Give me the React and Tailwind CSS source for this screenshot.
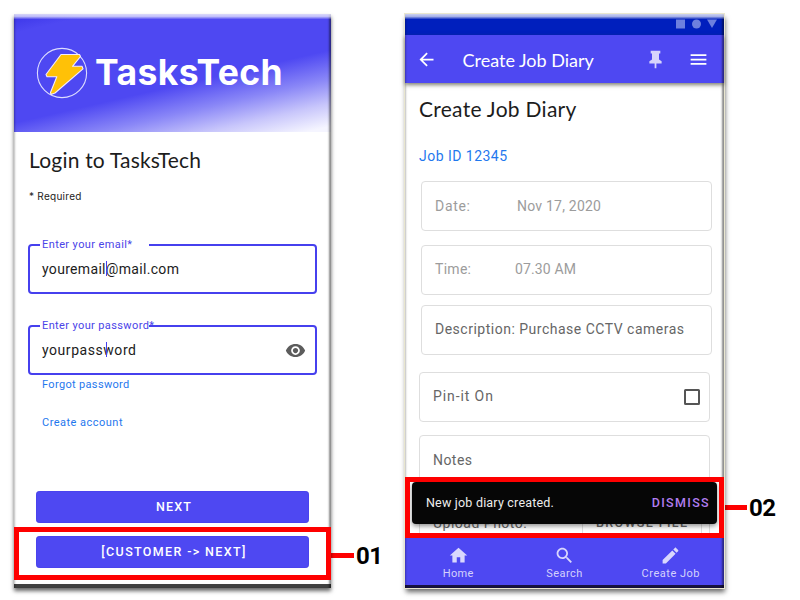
function StatusIcons() {
  return (
    <svg width="42" height="10" viewBox="0 0 42 10" className="fill-[#6d80de]">
      <rect x="0" y="0.5" width="9" height="9" />
      <circle cx="20.5" cy="5" r="4.5" />
      <path d="M31 0.5h10L36 9z" />
    </svg>
  );
}

function Logo() {
  return (
    <svg width="52" height="52" viewBox="0 0 52 52" className="shrink-0">
      <circle cx="26" cy="26" r="24.6" fill="none" stroke="#dcdcff" strokeWidth="1.1" />
      <path
        d="M25 7.5H43.5L44.5 9.5L36.5 19.3H46L47 21.8L19 46L15 47.5L14.5 45.5L20.8 29.8H11L10 27.5z"
        fill="#ffc107"
        stroke="#f3ecff"
        strokeWidth="1.1"
        strokeLinejoin="round"
      />
    </svg>
  );
}

function Icon({ d, className }) {
  return (
    <svg viewBox="0 0 24 24" className={className}>
      <path d={d} />
    </svg>
  );
}

const paths = {
  back: "M20 11H7.83l5.59-5.59L12 4l-8 8 8 8 1.41-1.41L7.83 13H20v-2z",
  menu: "M3 18h18v-2H3v2zm0-5h18v-2H3v2zm0-7v2h18V6H3z",
  eye: "M12 4.5C7 4.5 2.73 7.61 1 12c1.73 4.39 6 7.5 11 7.5s9.27-3.11 11-7.5c-1.73-4.39-6-7.5-11-7.5zM12 17c-2.76 0-5-2.24-5-5s2.24-5 5-5 5 2.24 5 5-2.24 5-5 5zm0-8c-1.66 0-3 1.34-3 3s1.34 3 3 3 3-1.34 3-3-1.34-3-3-3z",
  pin: "M16 12V5h1.5V2h-11v3H8v7l-3 2v2.5h6V22h2v-5.500h6V14z",
  home: "M10 20v-6h4v6h5v-8h3L12 3 2 12h3v8z",
  search:
    "M15.5 14h-.79l-.28-.27C15.41 12.59 16 11.11 16 9.5 16 5.91 13.09 3 9.5 3S3 5.91 3 9.5 5.91 16 9.5 16c1.61 0 3.09-.59 4.23-1.57l.27.28v.79l5 4.99L20.49 19l-4.99-5zm-6 0C7.01 14 5 11.99 5 9.5S7.01 5 9.5 5 14 7.01 14 9.5 11.99 14 9.5 14z",
  edit: "M3 17.25V21h3.75L17.81 9.94l-3.75-3.75L3 17.25zM20.71 7.04c.39-.39.39-1.02 0-1.41l-2.34-2.34c-.39-.39-1.02-.39-1.41 0l-1.83 1.83 3.75 3.75 1.83-1.83z",
};

function LoginField({ label, labelSpacing, value, valueSpacing, caret, children }) {
  return (
    <div className="relative flex h-[50px] w-[289px] items-center justify-between rounded-[4px] border-2 border-[#4640ee] pr-[9px] pl-3">
      <div className="absolute -top-[9px] left-[10px] h-4 w-[109px] bg-white pl-0.5">
        <span className={`block text-[11px] leading-4 whitespace-nowrap text-[#4a44e8] ${labelSpacing}`}>{label}</span>
      </div>
      <span className={`text-[14px] leading-5 text-[#1c1c1c] ${valueSpacing}`}>{value}</span>
      <span className={`absolute top-[15px] h-[15px] w-px bg-[#4640ee] ${caret}`} />
      {children}
    </div>
  );
}

function PhoneEdge() {
  return (
    <div className="pointer-events-none absolute inset-0 shadow-[inset_-3px_0_2px_-1px_rgba(0,0,0,0.45),inset_2px_0_2px_-1px_rgba(0,0,0,0.25)]">
      <div className="h-[5px] bg-linear-to-b from-white/80 via-white/65 to-white/10" />
    </div>
  );
}

function LoginPhone() {
  return (
    <section className="relative mt-[14px] flex h-[574px] w-[317px] shrink-0 flex-col bg-white shadow-[0_3px_4px_rgba(0,0,0,0.6)]">
      <header className="flex h-[118px] items-center bg-[linear-gradient(167deg,#3a34e8_0%,#4e48f2_10%,#4e48f2_57%,#8a87f7_72%,#c8c6fb_85%,#f5f5ff_97%)] pl-[22px]">
        <Logo />
        <span className="ml-[7px] font-[Inter,sans-serif] text-[35.5px] leading-10 font-bold tracking-[0.4px] text-white">TasksTech</span>
      </header>
      <div className="pt-[14px] pl-[14px]">
        <h1 className="pl-[1px] font-[Lato,sans-serif] text-[21px] leading-7 tracking-[0.2px] text-[#1c1c1c]">Login to TasksTech</h1>
        <p className="mt-[14px] pl-[1px] font-[Inter,sans-serif] text-[10px] leading-4 tracking-[0.27px] text-[#222]">* Required</p>
        <div className="mt-[40px]">
          <LoginField label="Enter your email*" labelSpacing="tracking-[0.4px]" value="youremail@mail.com" valueSpacing="tracking-[0.32px]" caret="left-[76px]" />
        </div>
        <div className="mt-[31px]">
          <LoginField label="Enter your password*" labelSpacing="tracking-[0.38px]" value="yourpassword" valueSpacing="tracking-[0.55px]" caret="left-[76px]">
            <Icon d={paths.eye} className="size-[21px] fill-[#5c5c5c]" />
          </LoginField>
        </div>
        <a className="mt-[2px] block pl-[14px] text-[11px] leading-4 tracking-[0.34px] text-[#1f78ee]">Forgot password</a>
        <a className="mt-[22px] block pl-[14px] text-[11px] leading-4 tracking-[0.48px] text-[#1f78ee]">Create account</a>
      </div>
      <div className="mt-auto">
        <button className="mb-[4px] ml-[22px] flex h-8 w-[273px] items-center justify-center rounded-[4px] bg-[#4e48f2] pt-px pl-[3px] text-[12.5px] font-medium tracking-[1.18px] text-white shadow-[inset_0_0_1px_#2823c8]">NEXT</button>
        <div className="relative z-10 flex h-[53px] w-[317px] items-start justify-center border-5 border-[#fe0000] pt-1">
          <button className="flex h-8 w-[273px] items-center justify-center rounded-[4px] bg-[#4e48f2] pl-[3px] text-[12.5px] font-medium tracking-[1.35px] text-white shadow-[inset_0_0_1px_#2823c8]">[CUSTOMER -&gt; NEXT]</button>
        </div>
        <div className="mt-[4px] h-1 bg-[#404040]" />
      </div>
      <PhoneEdge />
    </section>
  );
}

function Callout({ number, className, spacing }) {
  return (
    <div className={`flex items-center ${className}`}>
      <span className="h-[5px] w-[23px] bg-[#fe0000]" />
      <span className={`ml-[2px] pt-px text-[24px] leading-6 font-bold text-black ${spacing}`}>{number}</span>
    </div>
  );
}

const box = "flex h-[50px] w-[291px] items-center rounded-[4px] border border-[#dedede] text-[14px]";

function DiaryPhone() {
  return (
    <section className="relative mt-[14px] flex h-[574px] w-[319px] shrink-0 flex-col bg-white shadow-[0_0_0_1px_#e9e6cf,1px_4px_5px_rgba(0,0,0,0.6)]">
      <div className="flex h-[21px] shrink-0 justify-end bg-[#001fbd] pt-[5px] pr-[6px]">
        <StatusIcons />
      </div>
      <header className="flex h-12 shrink-0 items-center bg-[#4e48f2] text-white shadow-[0_2px_4px_rgba(60,60,40,0.65)]">
        <Icon d={paths.back} className="ml-[11px] size-[21px] fill-white" />
        <span className="ml-[25.5px] pt-px font-[Lato,sans-serif] text-[18px] leading-6">Create Job Diary</span>
        <Icon d={paths.pin} className="mt-[1px] ml-[51px] size-[21px] fill-[#d6d4fc]" />
        <Icon d={paths.menu} className="ml-[22.5px] size-[21px] fill-white" />
      </header>
      <div className="h-[455px] shrink-0 overflow-hidden pt-3 pl-[14px] text-[#666]">
        <h1 className="font-[Lato,sans-serif] text-[21px] leading-7 tracking-[0.28px] text-[#1c1c1c]">Create Job Diary</h1>
        <p className="mt-[23px] text-[14px] leading-5 tracking-[0.47px] text-[#1f78ee]">Job ID 12345</p>
        <div className={`${box} mt-[15px] ml-[2px] pl-[13px] text-[#9c9c9c]`}>
          <span className="w-[82px] tracking-[0.7px]">Date:</span>
          <span className="tracking-[0.22px]">Nov 17, 2020</span>
        </div>
        <div className={`${box} mt-[14px] ml-[2px] pl-[13px] text-[#9c9c9c]`}>
          <span className="w-[80px] pb-px tracking-[0.28px]">Time:</span>
          <span className="pb-px tracking-[0.14px]">07.30 AM</span>
        </div>
        <div className={`${box} mt-[10px] ml-[2px] pl-[13px]`}>
          <span className="pb-px tracking-[0.5px]">Description: Purchase CCTV cameras</span>
        </div>
        <div className={`${box} mt-[17px] justify-between pr-[9px] pl-[13px]`}>
          <span className="pb-px tracking-[0.9px]">Pin-it On</span>
          <span className="size-4 rounded-[1.5px] border-2 border-[#555]" />
        </div>
        <div className={`${box} mt-[13px] pl-[13px]`}>
          <span className="tracking-[0.45px]">Notes</span>
        </div>
        <div className={`${box} mt-[13px] justify-between pr-[7px] pl-[13px]`}>
          <span className="pt-px tracking-[0.5px]">Upload Photo:</span>
          <span className="flex h-[38px] w-[120px] items-center border border-[#dedede] pt-px pl-[13px] text-[12.5px] font-medium tracking-[1.36px]">BROWSE FILE</span>
        </div>
      </div>
      <nav className="grid h-[47px] shrink-0 grid-cols-3 bg-[#4e48f2] pt-[7px] text-[11px] leading-4 text-[#d4d2fc]">
        <div className="flex flex-col items-center">
          <Icon d={paths.home} className="size-[21px] fill-[#d9d7fd]" />
          <span className="tracking-[0.3px]">Home</span>
        </div>
        <div className="flex flex-col items-center">
          <Icon d={paths.search} className="size-[21px] fill-[#d9d7fd]" />
          <span className="tracking-[0.44px]">Search</span>
        </div>
        <div className="flex flex-col items-center">
          <Icon d={paths.edit} className="size-[21px] fill-[#d9d7fd]" />
          <span className="tracking-[0.52px]">Create Job</span>
        </div>
      </nav>
      <div className="h-[3px] shrink-0 bg-[#17123f]" />
      <div className="absolute top-[468px] left-[7px] flex h-[42px] w-[305px] items-center justify-between rounded-[4px] bg-[#060606] pr-[7px] pl-[14px] text-[12.5px] shadow-[0_2px_5px_rgba(0,0,0,0.45)]">
        <span className="tracking-[0.2px] text-[#ededed]">New job diary created.</span>
        <span className="font-medium tracking-[1.35px] text-[#b17df0]">DISMISS</span>
      </div>
      <PhoneEdge />
      <div className="absolute top-[463px] left-0 h-[61px] w-[319px] border-5 border-[#fe0000]" />
    </section>
  );
}

export default function App() {
  return (
    <main className="flex h-[600px] w-[800px] items-start overflow-hidden bg-white pl-[14px] font-[Roboto,sans-serif]">
      <LoginPhone />
      <Callout number="01" className="mt-[543px] w-[74px] shrink-0" spacing="tracking-[-0.5px]" />
      <DiaryPhone />
      <Callout number="02" className="mt-[495px]" spacing="tracking-[-0.5px]" />
    </main>
  );
}
